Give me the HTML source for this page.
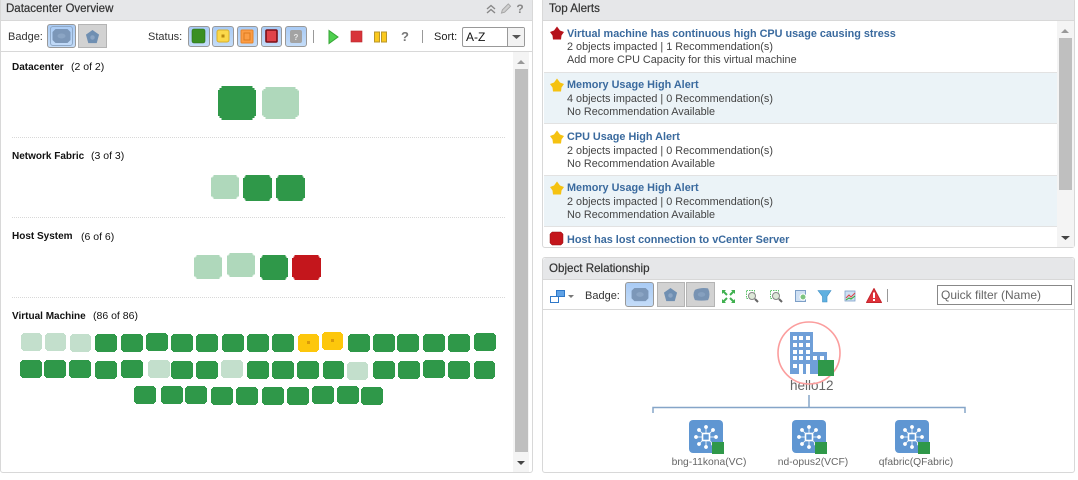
<!DOCTYPE html>
<html><head><meta charset="utf-8">
<style>
html,body{margin:0;padding:0;background:#fff}
body{width:1078px;height:480px;position:relative;overflow:hidden;font-family:"Liberation Sans",Arial,sans-serif;font-size:12px;color:#333}
.a{position:absolute}
.t{position:absolute;white-space:nowrap;line-height:14px}
.panel{position:absolute;border:1px solid #d8d8d8;border-radius:3px;box-sizing:border-box;background:#fff}
.hd{position:absolute;background:#e6e7e9;border-bottom:1px solid #d8d8d8}
.h{font-size:11.6px;color:#333;-webkit-text-stroke:.2px #333}
.b{font-weight:bold;font-size:10px;color:#111}
.al{color:#3a6a9e;font-weight:bold;font-size:10.85px}
.s{font-size:10.85px;color:#444}
.n{font-size:10.5px;color:#111}
.btn{position:absolute;box-sizing:border-box;border:1px solid #b4b4b4;background:#d2d2d2}
.sel{border:1px solid #999;border-radius:3px;background:linear-gradient(#a9cbf5,#c4dcf8)}
.sb{position:absolute;background:#f4f4f4}
.th{position:absolute;background:#bfbfbf}
.sep{position:absolute;background:#999;width:1px}
.row{position:absolute;left:544px;width:513px;box-sizing:border-box;border-bottom:1px solid #e2e2e2}
.lab{position:absolute;font-size:10.3px;color:#666;text-align:center;white-space:nowrap;line-height:12px}
svg{position:absolute;overflow:visible}
</style></head><body>

<!-- Left panel -->
<div class="panel" style="left:0;top:-2px;width:533px;height:475px"></div>
<div class="hd" style="left:1px;top:0;width:531px;height:20px"></div>
<div class="t h" style="left:6px;top:2px;font-size:11.5px">Datacenter Overview</div>
<div class="a" style="left:1px;top:51px;width:531px;height:1px;background:#d8d8d8"></div>
<div class="t" style="left:8px;top:30px;font-size:11px">Badge:</div>
<div class="btn sel" style="left:47px;top:24px;width:29px;height:24px"><div class="a" style="left:2px;top:1px;width:23px;height:20px;border:1px solid #8fa9c8;border-radius:3px;box-sizing:border-box"></div></div>
<div class="btn" style="left:78px;top:24px;width:29px;height:24px"></div>
<div class="t" style="left:148px;top:30px;font-size:11px">Status:</div>
<div class="btn sel" style="left:188px;top:26px;width:22px;height:21px"></div>
<div class="btn sel" style="left:212px;top:26px;width:22px;height:21px"></div>
<div class="btn sel" style="left:237px;top:26px;width:21px;height:21px"></div>
<div class="btn sel" style="left:261px;top:26px;width:21px;height:21px"></div>
<div class="btn sel" style="left:285px;top:26px;width:22px;height:21px"></div>
<div class="sep" style="left:313px;top:30px;height:13px"></div>
<div class="sep" style="left:422px;top:30px;height:13px"></div>
<div class="t" style="left:434px;top:30px;font-size:11px;color:#222">Sort:</div>
<div class="a" style="left:462px;top:27px;width:63px;height:20px;box-sizing:border-box;border:1px solid #999;border-radius:2px;background:#fff"><div class="a" style="right:0;top:0;width:16px;height:18px;background:#f2f2f2;border-left:1px solid #999"></div></div>
<div class="t" style="left:466px;top:30px;color:#111;font-size:12px">A-Z</div>

<div class="sb" style="left:513px;top:52px;width:16px;height:420px"></div>
<div class="th" style="left:515px;top:69px;width:13px;height:383px"></div>

<div class="t b" style="left:12px;top:61px">Datacenter</div><div class="t n" style="left:71px;top:60px">(2 of 2)</div>
<div class="t b" style="left:12px;top:150px">Network Fabric</div><div class="t n" style="left:91px;top:149px">(3 of 3)</div>
<div class="t b" style="left:12px;top:230px">Host System</div><div class="t n" style="left:81px;top:230px">(6 of 6)</div>
<div class="t b" style="left:12px;top:310px">Virtual Machine</div><div class="t n" style="left:93px;top:309px">(86 of 86)</div>
<div class="a" style="left:12px;top:137px;width:493px;border-top:1px dotted #d8d8d8"></div>
<div class="a" style="left:12px;top:217px;width:493px;border-top:1px dotted #d8d8d8"></div>
<div class="a" style="left:12px;top:297px;width:493px;border-top:1px dotted #d8d8d8"></div>

<svg width="1078" height="480" style="left:0;top:0" shape-rendering="crispEdges">
<defs>
<symbol id="k" viewBox="0 0 22 18" preserveAspectRatio="none"><path d="M2 0H20V1H21V2H22V16H21V17H20V18H2V17H1V16H0V2H1V1H2Z"/></symbol>
</defs>
<g fill="#2f9849">
<use href="#k" x="218" y="86" width="38" height="34"/>
<use href="#k" x="243" y="175" width="29" height="26"/><use href="#k" x="276" y="175" width="29" height="26"/>
<use href="#k" x="260" y="255" width="28" height="25"/>
<use href="#k" x="95" y="334" width="22" height="18"/><use href="#k" x="121" y="334" width="22" height="18"/><use href="#k" x="146" y="333" width="22" height="18"/><use href="#k" x="171" y="334" width="22" height="18"/><use href="#k" x="196" y="334" width="22" height="18"/><use href="#k" x="222" y="334" width="22" height="18"/><use href="#k" x="247" y="334" width="22" height="18"/><use href="#k" x="272" y="334" width="22" height="18"/>
<use href="#k" x="348" y="334" width="22" height="18"/><use href="#k" x="373" y="334" width="22" height="18"/><use href="#k" x="397" y="334" width="22" height="18"/><use href="#k" x="423" y="334" width="22" height="18"/><use href="#k" x="448" y="334" width="22" height="18"/><use href="#k" x="474" y="333" width="22" height="18"/>
<use href="#k" x="20" y="360" width="22" height="18"/><use href="#k" x="44" y="360" width="22" height="18"/><use href="#k" x="69" y="360" width="22" height="18"/><use href="#k" x="95" y="361" width="22" height="18"/><use href="#k" x="121" y="360" width="22" height="18"/><use href="#k" x="171" y="361" width="22" height="18"/><use href="#k" x="196" y="361" width="22" height="18"/><use href="#k" x="247" y="361" width="22" height="18"/><use href="#k" x="272" y="361" width="22" height="18"/><use href="#k" x="297" y="361" width="22" height="18"/><use href="#k" x="323" y="361" width="21" height="18"/><use href="#k" x="373" y="361" width="22" height="18"/><use href="#k" x="398" y="361" width="22" height="18"/><use href="#k" x="423" y="360" width="22" height="18"/><use href="#k" x="448" y="361" width="22" height="18"/><use href="#k" x="474" y="361" width="21" height="18"/>
<use href="#k" x="134" y="386" width="22" height="18"/><use href="#k" x="161" y="386" width="22" height="18"/><use href="#k" x="185" y="386" width="22" height="18"/><use href="#k" x="211" y="387" width="22" height="18"/><use href="#k" x="236" y="387" width="22" height="18"/><use href="#k" x="262" y="387" width="22" height="18"/><use href="#k" x="287" y="387" width="22" height="18"/><use href="#k" x="312" y="386" width="22" height="18"/><use href="#k" x="337" y="386" width="22" height="18"/><use href="#k" x="361" y="387" width="22" height="18"/>
</g>
<g fill="#afd8bb">
<use href="#k" x="262" y="87" width="37" height="32"/>
<use href="#k" x="211" y="175" width="28" height="24"/>
<use href="#k" x="194" y="255" width="28" height="24"/><use href="#k" x="227" y="253" width="28" height="24"/>
</g>
<g fill="#c3dfcc">
<use href="#k" x="21" y="333" width="21" height="18"/><use href="#k" x="45" y="333" width="21" height="18"/><use href="#k" x="70" y="334" width="21" height="18"/>
<use href="#k" x="148" y="360" width="22" height="18"/><use href="#k" x="221" y="360" width="22" height="18"/><use href="#k" x="347" y="362" width="21" height="18"/>
</g>
<use href="#k" x="292" y="255" width="29" height="25" fill="#c4161c"/>
<g fill="#fdc70c"><use href="#k" x="298" y="334" width="21" height="18"/><use href="#k" x="322" y="332" width="21" height="18"/></g>
<rect x="307" y="341" width="3" height="3" fill="#d99a0a"/><rect x="331" y="339" width="3" height="3" fill="#d99a0a"/>
</svg>

<!-- Left toolbar icons -->
<svg width="1078" height="480" style="left:0;top:0">
<defs>
<symbol id="oct" viewBox="0 0 20 16"><path d="M4 1H16L19 4V12L16 15H4L1 12V4Z" fill="#7c97b8"/><ellipse cx="10" cy="8" rx="4" ry="2.5" fill="#8ba5c4"/></symbol>
<symbol id="pent" viewBox="0 0 16 16"><path d="M8 1L15 6L12.5 15H3.5L1 6Z" fill="#6f8fb2"/><circle cx="8" cy="9" r="2.4" fill="#8ba5c4"/></symbol>
<symbol id="blob" viewBox="0 0 20 16"><path d="M3 3Q10 0 17 1.5Q20 8 17 14Q10 15 3 14Q0 8 3 3Z" fill="#7893b3"/><ellipse cx="10" cy="8" rx="4" ry="2.5" fill="#86a0bf"/></symbol>
<symbol id="chev" viewBox="0 0 10 10"><path d="M1 5L5 1.5L9 5M1 9L5 5.5L9 9" fill="none" stroke="#888" stroke-width="1.4"/></symbol>
<symbol id="pen" viewBox="0 0 12 12"><path d="M1 11L2 7.500L8.500 1L11 3.500L4.500 10Z" fill="#cfcfcf" stroke="#a5a5a5"/></symbol>
<symbol id="star" viewBox="0 0 14 14"><path d="M7 .5L10 4.500L14 6L11.500 9.500L11 13.500H3L2.500 9.500L0 6L4 4.500Z"/></symbol>
<symbol id="node" viewBox="0 0 34 34"><rect width="34" height="33" rx="4" fill="#5f96d2"/><g stroke="#fff" fill="#fff"><path d="M17 17L17 6M17 17L17 28M17 17L6 17M17 17L28 17M17 17L9 9M17 17L25 9M17 17L9 25M17 17L25 25" stroke-width=".8"/><circle cx="17" cy="7" r="1.700" stroke-width=".5"/><circle cx="17" cy="27" r="1.700" stroke-width=".5"/><circle cx="7" cy="17" r="1.700" stroke-width=".5"/><circle cx="27" cy="17" r="1.700" stroke-width=".5"/><circle cx="10" cy="10" r="1.700" stroke-width=".5"/><circle cx="24" cy="10" r="1.700" stroke-width=".5"/><circle cx="10" cy="24" r="1.700" stroke-width=".5"/><circle cx="24" cy="24" r="1.700" stroke-width=".5"/></g><rect x="13.500" y="13.500" width="7" height="7" fill="#5f96d2" stroke="#fff" stroke-width="1.600"/></symbol>
</defs>
<use href="#oct" x="51" y="28" width="21" height="16"/>
<use href="#pent" x="85" y="29" width="15" height="15"/>
<!-- status -->
<rect x="192" y="29" width="13" height="14" rx="2" fill="#3a8f22" stroke="#2b6e18" stroke-width=".6"/>
<rect x="217" y="30" width="12" height="12" rx="2" fill="#fbd84a" stroke="#d9b02a"/><rect x="221.500" y="34.500" width="3" height="3" fill="#b98a10"/>
<rect x="241" y="30" width="12" height="13" rx="1" fill="#fb9d45" stroke="#e88427"/><rect x="244" y="33" width="6" height="7" fill="none" stroke="#dd7a20"/>
<rect x="266" y="30" width="11" height="12" rx="1" fill="#e0434a" stroke="#7a1018" stroke-width="1.600"/>
<rect x="290" y="30" width="12" height="13" rx="2" fill="#a3a3a3"/><text x="296" y="40" font-size="8" font-weight="bold" fill="#e8e8e8" text-anchor="middle" font-family="Liberation Sans">?</text>
<!-- play/stop/pause -->
<path d="M329 30.500L338 37L329 43.500Z" fill="#4fd04f" stroke="#35a535"/>
<rect x="351" y="31" width="11" height="11" fill="#d8333a" stroke="#b92a30" stroke-width=".6"/>
<rect x="374.500" y="32" width="5" height="10" fill="#fbc91e" stroke="#b8962a"/><rect x="381.500" y="32" width="5" height="10" fill="#fbc91e" stroke="#b8962a"/>
<text x="405" y="41" font-size="13" font-weight="bold" fill="#777" text-anchor="middle" font-family="Liberation Sans">?</text>
<path d="M512 35h9l-4.500 4z" fill="#555"/>
<path d="M517 64l4 -4 4 4z" fill="#999"/>
<path d="M517 461h8l-4 4z" fill="#444"/>
<!-- header icons -->
<use href="#chev" x="486" y="4" width="10" height="10"/><use href="#pen" x="500" y="3" width="12" height="11"/>
<text x="520" y="13" font-size="12" font-weight="bold" fill="#888" text-anchor="middle" font-family="Liberation Sans">?</text>
<use href="#chev" x="1028" y="4" width="10" height="10"/><use href="#pen" x="1043" y="3" width="12" height="11"/>
<text x="1063" y="13" font-size="12" font-weight="bold" fill="#888" text-anchor="middle" font-family="Liberation Sans">?</text>
<use href="#chev" x="1028" y="264" width="10" height="10"/><use href="#pen" x="1043" y="263" width="12" height="11"/>
<text x="1063" y="273" font-size="12" font-weight="bold" fill="#888" text-anchor="middle" font-family="Liberation Sans">?</text>
</svg>

<!-- Top Alerts -->
<div class="panel" style="left:542px;top:-2px;width:533px;height:250px"></div>
<div class="hd" style="left:543px;top:0;width:531px;height:20px"></div>
<div class="t h" style="left:549px;top:2px">Top Alerts</div>
<div class="row" style="top:21px;height:52px;background:#fff"></div>
<div class="row" style="top:73px;height:51px;background:#ebf3f7"></div>
<div class="row" style="top:124px;height:52px;background:#fff"></div>
<div class="row" style="top:176px;height:51px;background:#ebf3f7"></div>
<div class="sb" style="left:1057px;top:21px;width:17px;height:226px"></div>
<div class="th" style="left:1059px;top:38px;width:13px;height:152px"></div>
<div class="t al" style="left:567px;top:27px">Virtual machine has continuous high CPU usage causing stress</div>
<div class="t s" style="left:567px;top:40px">2 objects impacted | 1 Recommendation(s)</div>
<div class="t s" style="left:567px;top:53px">Add more CPU Capacity for this virtual machine</div>
<div class="t al" style="left:567px;top:78px">Memory Usage High Alert</div>
<div class="t s" style="left:567px;top:92px">4 objects impacted | 0 Recommendation(s)</div>
<div class="t s" style="left:567px;top:105px">No Recommendation Available</div>
<div class="t al" style="left:567px;top:130px">CPU Usage High Alert</div>
<div class="t s" style="left:567px;top:144px">2 objects impacted | 0 Recommendation(s)</div>
<div class="t s" style="left:567px;top:157px">No Recommendation Available</div>
<div class="t al" style="left:567px;top:181px">Memory Usage High Alert</div>
<div class="t s" style="left:567px;top:195px">2 objects impacted | 0 Recommendation(s)</div>
<div class="t s" style="left:567px;top:208px">No Recommendation Available</div>
<div class="t al" style="left:567px;top:233px">Host has lost connection to vCenter Server</div>

<!-- Object Relationship -->
<div class="panel" style="left:542px;top:257px;width:533px;height:216px"></div>
<div class="hd" style="left:543px;top:258px;width:531px;height:21px;border-radius:3px 3px 0 0"></div>
<div class="t h" style="left:549px;top:262px">Object Relationship</div>
<div class="a" style="left:543px;top:309px;width:531px;height:1px;background:#d8d8d8"></div>
<div class="t" style="left:585px;top:289px;font-size:11px">Badge:</div>
<div class="btn sel" style="left:625px;top:282px;width:29px;height:25px"></div>
<div class="btn" style="left:657px;top:282px;width:28px;height:25px"></div>
<div class="btn" style="left:686px;top:282px;width:29px;height:25px"></div>
<div class="sep" style="left:887px;top:289px;height:13px"></div>
<div class="a" style="left:937px;top:285px;width:135px;height:20px;box-sizing:border-box;border:1px solid #888;background:#fff"></div>
<div class="t" style="left:941px;top:288px;color:#666;font-size:12px">Quick filter (Name)</div>
<div class="t" style="left:790px;top:378px;font-size:13.5px;color:#666;line-height:16px">hello12</div>
<div class="lab" style="left:649px;top:457px;width:120px">bng-11kona(VC)</div>
<div class="lab" style="left:753px;top:457px;width:120px">nd-opus2(VCF)</div>
<div class="lab" style="left:856px;top:457px;width:120px">qfabric(QFabric)</div>

<svg width="1078" height="480" style="left:0;top:0">
<!-- alert icons -->
<use href="#star" x="550" y="26" width="14" height="14" fill="#b5121b"/>
<use href="#star" x="550" y="78" width="14" height="14" fill="#f5c211"/>
<use href="#star" x="550" y="130" width="14" height="14" fill="#f5c211"/>
<use href="#star" x="550" y="181" width="14" height="14" fill="#f5c211"/>
<path d="M552 232H561L563 234V243L561 245H552L550 243V234Z" fill="#c4161c" stroke="#8f1015" stroke-width=".5"/>
<path d="M1061 33l4 -4 4 4z" fill="#999"/>
<path d="M1061 236h9l-4.500 4z" fill="#444"/>
<!-- bottom toolbar -->
<rect x="550.500" y="296.500" width="8" height="6" fill="#fff" stroke="#2f78c8"/><rect x="556.500" y="290.500" width="8" height="6" fill="#5fa2e6" stroke="#2f78c8"/>
<path d="M568 295h6l-3 3z" fill="#777"/>
<use href="#oct" x="630" y="287" width="20" height="15"/>
<use href="#pent" x="663" y="287" width="15" height="15"/>
<use href="#blob" x="692" y="287" width="19" height="15"/>
<g fill="none" stroke="#3fb04f" stroke-width="2"><path d="M723 291l4 4M734 291l-4 4M723 302l4 -4M734 302l-4 -4"/></g>
<g fill="#3fb04f"><path d="M722 290h4l-4 4zM735 290h-4l4 4zM722 303h4l-4 -4zM735 303h-4l4 -4z"/></g>
<rect x="746.500" y="290.500" width="8" height="8" fill="none" stroke="#5cc46a" stroke-dasharray="1.500 1"/><circle cx="752" cy="296" r="3.500" fill="#dde8d8" stroke="#888"/><path d="M755 299l3 3" stroke="#666" stroke-width="2"/>
<rect x="770.500" y="290.500" width="8" height="8" fill="none" stroke="#5cc46a" stroke-dasharray="1.500 1"/><circle cx="776" cy="296" r="3.500" fill="#dde8d8" stroke="#888"/><path d="M779 299l3 3" stroke="#666" stroke-width="2"/>
<rect x="795.500" y="290.500" width="10" height="11" fill="#cfe0f3" stroke="#7d9fc7"/><circle cx="803" cy="297" r="3" fill="#7cc47f" stroke="#fff"/>
<path d="M818 290.500H831L827 296.500V302H822.500V296.500Z" fill="#5fb0e0" stroke="#3c8ec4" stroke-width=".6"/>
<rect x="845" y="291" width="10" height="10" fill="#cfe0f3" stroke="#7da0c8" stroke-width=".8"/><path d="M846 298l3 -3 2 2 4 -4" fill="none" stroke="#d44"/><path d="M846 300l3 -2 2 1 4 -3" fill="none" stroke="#3a3"/>
<path d="M874 288.500L881.500 302.500H866.500Z" fill="#e0323a" stroke="#c4262d" stroke-linejoin="round"/><rect x="873" y="292.500" width="2" height="5.500" fill="#fff"/><rect x="873" y="299" width="2" height="2" fill="#fff"/>
<!-- building -->
<circle cx="809" cy="353" r="31" fill="none" stroke="#fb9d9d" stroke-width="1.600"/>
<path d="M790 332H813V352H827V374H790Z" fill="#6f9fd8"/>
<g fill="#fff">
<rect x="793" y="336" width="4" height="4"/><rect x="799" y="336" width="4" height="4"/><rect x="806" y="336" width="4" height="4"/>
<rect x="793" y="343" width="4" height="4"/><rect x="799" y="343" width="4" height="4"/><rect x="806" y="343" width="4" height="4"/>
<rect x="793" y="350" width="4" height="4"/><rect x="799" y="350" width="4" height="4"/><rect x="806" y="350" width="4" height="4"/>
<rect x="793" y="356" width="4" height="4"/><rect x="799" y="356" width="4" height="4"/><rect x="806" y="356" width="4" height="4"/><rect x="813" y="356" width="4" height="4"/><rect x="820" y="356" width="4" height="4"/>
<rect x="793" y="364" width="4" height="4"/><rect x="799" y="364" width="4" height="10"/><rect x="806" y="364" width="4" height="10"/>
</g>
<rect x="818" y="360" width="16" height="16" fill="#2f9849"/>
<!-- connector -->
<path d="M809 395V407M653 413V407.500H965V413" fill="none" stroke="#85a5c8" stroke-width="1.500"/>
<use href="#node" x="689" y="420" width="34" height="34"/><rect x="712" y="442" width="12" height="12" fill="#2f9849"/>
<use href="#node" x="792" y="420" width="34" height="34"/><rect x="815" y="442" width="12" height="12" fill="#2f9849"/>
<use href="#node" x="895" y="420" width="34" height="34"/><rect x="918" y="442" width="12" height="12" fill="#2f9849"/>
</svg>
</body></html>
